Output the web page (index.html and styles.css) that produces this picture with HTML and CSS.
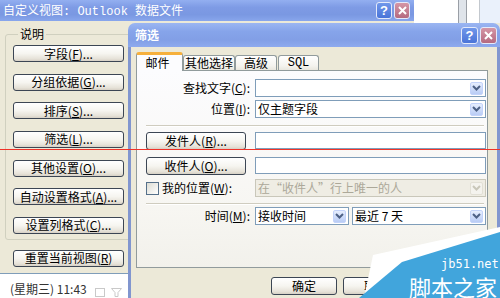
FILE: index.html
```html
<!DOCTYPE html>
<html lang="zh-CN">
<head>
<meta charset="utf-8">
<title>筛选</title>
<link rel="stylesheet" href="styles.css">
</head>
<body>
<div class="desk">
  <div class="win-back">
    <div class="back-title">
      <span class="title-text">自定义视图<span class="mono">: Outlook </span>数据文件</span>
      <div class="caps">
        <span class="cap help">?</span>
        <span class="cap close"><svg width="9" height="9" viewBox="0 0 9 9"><path d="M1 1L8 8M8 1L1 8" stroke="#fff" stroke-width="2"/></svg></span>
      </div>
    </div>
    <div class="back-body">
      <fieldset class="group">
        <legend>说明</legend>
        <div class="stack">
          <button class="btn side">字段(<u>F</u>)...</button>
          <button class="btn side">分组依据(<u>G</u>)...</button>
          <button class="btn side">排序(<u>S</u>)...</button>
          <button class="btn side">筛选(<u>L</u>)...</button>
          <button class="btn side">其他设置(<u>O</u>)...</button>
          <button class="btn side">自动设置格式(<u>A</u>)...</button>
          <button class="btn side">设置列格式(<u>C</u>)...</button>
        </div>
      </fieldset>
      <button class="btn side reset">重置当前视图(<u>R</u>)</button>
    </div>
    <div class="list">
      <span class="list-date">(星期三) 11:43</span>
      <svg class="faint" width="30" height="12" viewBox="0 0 30 12"><rect x="1.5" y="3.5" width="9" height="8" fill="none" stroke="#c9c9c9"/><path d="M17.5 3.5H27.5L24 7.5V11.5H21V7.5Z" fill="none" stroke="#c9c9c9"/></svg>
    </div>
  </div>

  <div class="win-other">
    <div class="o-white"></div>
    <div class="o-line"></div>
    <div class="o-grey"></div>
    <div class="o-line"></div>
    <div class="o-white2"></div>
    <div class="o-line2"></div>
    <div class="o-blue"></div>
  </div>

  <div class="dialog">
    <div class="dlg-title">
      <span class="dlg-name">筛选</span>
      <div class="caps">
        <span class="cap help">?</span>
        <span class="cap close"><svg width="9" height="9" viewBox="0 0 9 9"><path d="M1 1L8 8M8 1L1 8" stroke="#fff" stroke-width="2"/></svg></span>
      </div>
    </div>
    <div class="dlg-body">
      <div class="tabs">
        <div class="tab sel t1">邮件</div>
        <div class="tab t2">其他选择</div>
        <div class="tab t3">高级</div>
        <div class="tab t4">SQL</div>
      </div>
      <div class="panel">
        <div class="row r1">
          <span class="lbl">查找文字(<u>C</u>):</span>
          <div class="combo ctl"><span class="val"></span><span class="arrow"><svg width="9" height="6" viewBox="0 0 9 6"><path d="M1 1L4.5 4.5L8 1" fill="none" stroke="#4d6185" stroke-width="2"/></svg></span></div>
        </div>
        <div class="row r2">
          <span class="lbl">位置(<u>I</u>):</span>
          <div class="combo ctl"><span class="val">仅主题字段</span><span class="arrow"><svg width="9" height="6" viewBox="0 0 9 6"><path d="M1 1L4.5 4.5L8 1" fill="none" stroke="#4d6185" stroke-width="2"/></svg></span></div>
        </div>
        <div class="sep s1"></div>
        <div class="row r3">
          <div class="lbl-left"><button class="btn pick">发件人(<u>R</u>)...</button></div>
          <div class="input ctl"></div>
        </div>
        <div class="row r4">
          <div class="lbl-left"><button class="btn pick">收件人(<u>O</u>)...</button></div>
          <div class="input ctl"></div>
        </div>
        <div class="row r5">
          <div class="lbl-left chk"><span class="box"></span><span>我的位置(<u>W</u>):</span></div>
          <div class="combo ctl dis"><span class="val">在“收件人”行上唯一的人</span><span class="arrow"><svg width="9" height="6" viewBox="0 0 9 6"><path d="M1 1L4.5 4.5L8 1" fill="none" stroke="#c9c7ba" stroke-width="2"/></svg></span></div>
        </div>
        <div class="sep s2"></div>
        <div class="row r6">
          <span class="lbl">时间(<u>M</u>):</span>
          <div class="ctl pair">
            <div class="combo w1"><span class="val">接收时间</span><span class="arrow"><svg width="9" height="6" viewBox="0 0 9 6"><path d="M1 1L4.5 4.5L8 1" fill="none" stroke="#4d6185" stroke-width="2"/></svg></span></div>
            <div class="combo w2"><span class="val">最近 7 天</span><span class="arrow"><svg width="9" height="6" viewBox="0 0 9 6"><path d="M1 1L4.5 4.5L8 1" fill="none" stroke="#4d6185" stroke-width="2"/></svg></span></div>
          </div>
        </div>
      </div>
      <div class="actions">
        <button class="btn act">确定</button>
        <button class="btn act">取消</button>
      </div>
    </div>
  </div>

  <div class="redline"></div>

  <svg class="watermark" width="500" height="298" viewBox="0 0 500 298">
    <polygon points="364,298 373,255 500,227 500,298" fill="#ffffff"/>
    <polygon points="359,298 402,262 500,232 500,298" fill="#41a5dc"/>
    <text x="441" y="268" font-family="DejaVu Sans Mono, monospace" font-size="12" fill="#ffffff">jb51.net</text>
    <text x="409" y="296" font-family="Noto Sans CJK SC, sans-serif" font-size="22" fill="#ffffff">脚本之家</text>
  </svg>
</div>
</body>
</html>
```

FILE: styles.css
```css
* { box-sizing: border-box; }
html, body { margin: 0; padding: 0; }
body {
  width: 500px;
  height: 298px;
  overflow: hidden;
  font: 12px/14px "Noto Sans CJK SC", "Liberation Sans", sans-serif;
  color: #000;
  background: #ece9d8;
}
u { text-decoration: underline; text-underline-offset: 1px; }
.desk { position: relative; width: 500px; height: 298px; overflow: hidden; }

/* background window */
.win-back {
  position: absolute; left: 0; top: 0;
  width: 414px; height: 298px;
  display: flex; flex-direction: column;
  background: #ece9d8;
}
.back-title {
  height: 21px; flex: none;
  display: flex; align-items: center; justify-content: space-between;
  padding: 0 4px 0 3px;
  background: linear-gradient(#93aff0, #7e9be5 35%, #7a98e2 70%, #88a6ec);
  color: #fff;
}
.title-text { white-space: nowrap; line-height: 14px; }
.mono { font-family: "Liberation Mono", monospace; }
.caps { display: flex; gap: 2px; }
.cap {
  width: 16px; height: 17px;
  border: 1px solid #e4eafa; border-radius: 3px;
  display: flex; align-items: center; justify-content: center;
  color: #fff; font: bold 13px/1 "Liberation Sans", sans-serif;
}
.cap.help { background: linear-gradient(#7097ea, #4a74d8); }
.cap.close { background: linear-gradient(#d596a6, #b56a80); }

.back-body {
  flex: 1;
  display: flex; flex-direction: column; align-items: flex-start;
  padding: 6px 0 0 5px;
}
.group {
  margin: 0; width: 132px; min-inline-size: 0;
  border: 1px solid #d0d0bf; border-radius: 3px;
  padding: 4px 0 5px 7px;
}
.group legend { padding: 0 2px; margin-left: 5px; line-height: 14px; }
.stack { display: flex; flex-direction: column; gap: 11.67px; }

.btn {
  font: inherit; line-height: 14px; color: #000;
  border: 1px solid #3c4654; border-radius: 3px;
  background: linear-gradient(#ffffff, #f6f5f0 50%, #e6e2d8 85%, #d6d0c5);
  padding: 0; margin: 0;
  display: flex; align-items: center; justify-content: center;
  white-space: nowrap;
}
.side { width: 111px; height: 17px; }
.reset { margin: 10px 0 0 8px; }

.list {
  height: 25px; flex: none;
  border-top: 1px solid #7f9db9;
  background: #fff;
  padding: 8px 0 0 10px;
  display: flex; gap: 7px;
  color: #333;
}
.faint { margin-top: 3px; }

/* window strip at the top right */
.win-other {
  position: absolute; left: 414px; top: 0;
  width: 86px; height: 23px;
  display: flex;
  background: #fff;
}
.o-white { width: 44px; }
.o-line { width: 1px; background: #9a9fa6; }
.o-grey { width: 7px; background: #dfe4ea; }
.o-white2 { width: 12px; }
.o-line2 { width: 1px; background: #c3c8ce; }
.o-blue { flex: 1; background: #eaf1fb; }

/* filter dialog */
.dialog {
  position: absolute; left: 128px; top: 23px;
  width: 372px; height: 285px;
  display: flex; flex-direction: column;
}
.dlg-title {
  height: 24px; flex: none;
  border-radius: 7px 7px 0 0;
  background: linear-gradient(#9bb6f2, #86a4ea 35%, #829fe6 70%, #8eaaee);
  display: flex; align-items: center; justify-content: space-between;
  padding: 0 3px 0 7px;
  color: #fff;
}
.dlg-name { font-weight: bold; line-height: 14px; }
.dlg-title .cap { width: 17px; }
.dlg-body {
  flex: 1;
  background: #ece9d8;
  border-left: 3px solid #8196cf;
  border-right: 3px solid #8196cf;
  padding: 5px 9px 0 5px;
}

.tabs {
  display: flex; align-items: flex-end;
  height: 18px;
  position: relative; z-index: 1;
}
.tab {
  height: 15px;
  border: 1px solid #919b9c; border-bottom: none;
  border-radius: 3px 3px 0 0;
  background: linear-gradient(#ffffff, #f4f3ee 70%, #e9e7de);
  display: flex; align-items: center; justify-content: center;
  line-height: 14px; white-space: nowrap;
}
.tab.sel {
  height: 19px; margin-bottom: -1px;
  background: #fcfcfe;
  border-top: 3px solid #f6b03c;
  padding-right: 4px;
}
.t1 { width: 47px; }
.t2 { width: 52px; }
.t3 { width: 42px; }
.t4 { width: 41px; margin-left: 1px; font-family: "Liberation Mono", monospace; }

.panel {
  height: 198px;
  border: 1px solid #919b9c;
  background: linear-gradient(#fcfcfe, #f7f6f2 70%, #f2f1eb);
  padding: 8px 1px 0 9px;
  display: flex; flex-direction: column;
}
.row { display: flex; align-items: center; gap: 5px; height: 18px; flex: none; }
.lbl { width: 104px; flex: none; text-align: right; white-space: nowrap; }
.lbl-left { width: 104px; flex: none; display: flex; align-items: center; }
.ctl { width: 231px; flex: none; }

.r2 { margin-top: 3px; }
.r3 { margin-top: 5px; align-items: flex-start; }
.r4 { margin-top: 7px; align-items: flex-start; }
.r5 { margin-top: 4px; }
.r6 { margin-top: 2px; }
.sep {
  height: 2px; flex: none;
  border-top: 1px solid #cfccbf; border-bottom: 1px solid #fff;
  margin-right: 2px;
}
.s1 { margin-top: 7px; }
.s2 { margin-top: 6px; }

.combo {
  height: 18px;
  border: 1px solid #7f9db9;
  background: #fff;
  display: flex; align-items: center; justify-content: space-between;
  padding-left: 2px;
  white-space: nowrap;
}
.arrow {
  width: 13px; height: 13px; margin-right: 2px; flex: none;
  border: 1px solid #c3d3fa; border-radius: 2px;
  background: linear-gradient(#e6eefe, #b9ccf5);
  display: flex; align-items: center; justify-content: center;
}
.combo.dis { background: #efede4; border-color: #c9c7ba; color: #aca899; }
.combo.dis .arrow { background: #f4f3ee; border-color: #e2e0d6; }
.pair { display: flex; gap: 3px; }
.w1 { width: 94px; }
.w2 { width: 134px; }

.input { height: 17px; border: 1px solid #7f9db9; background: #fff; }
.pick { width: 100px; height: 18px; }

.chk { gap: 3px; white-space: nowrap; }
.box {
  width: 13px; height: 13px; flex: none;
  border: 1px solid #55708a;
  background: linear-gradient(135deg, #dcdcd4, #ffffff);
}

.actions {
  display: flex; justify-content: flex-end; gap: 6px;
  margin: 9px 79px 0 0;
}
.act { width: 66px; height: 18px; }

/* overlays */
.redline {
  position: absolute; left: 0; top: 149px;
  width: 500px; height: 1px;
  background: #f03228;
}
.watermark { position: absolute; left: 0; top: 0; pointer-events: none; }
```
